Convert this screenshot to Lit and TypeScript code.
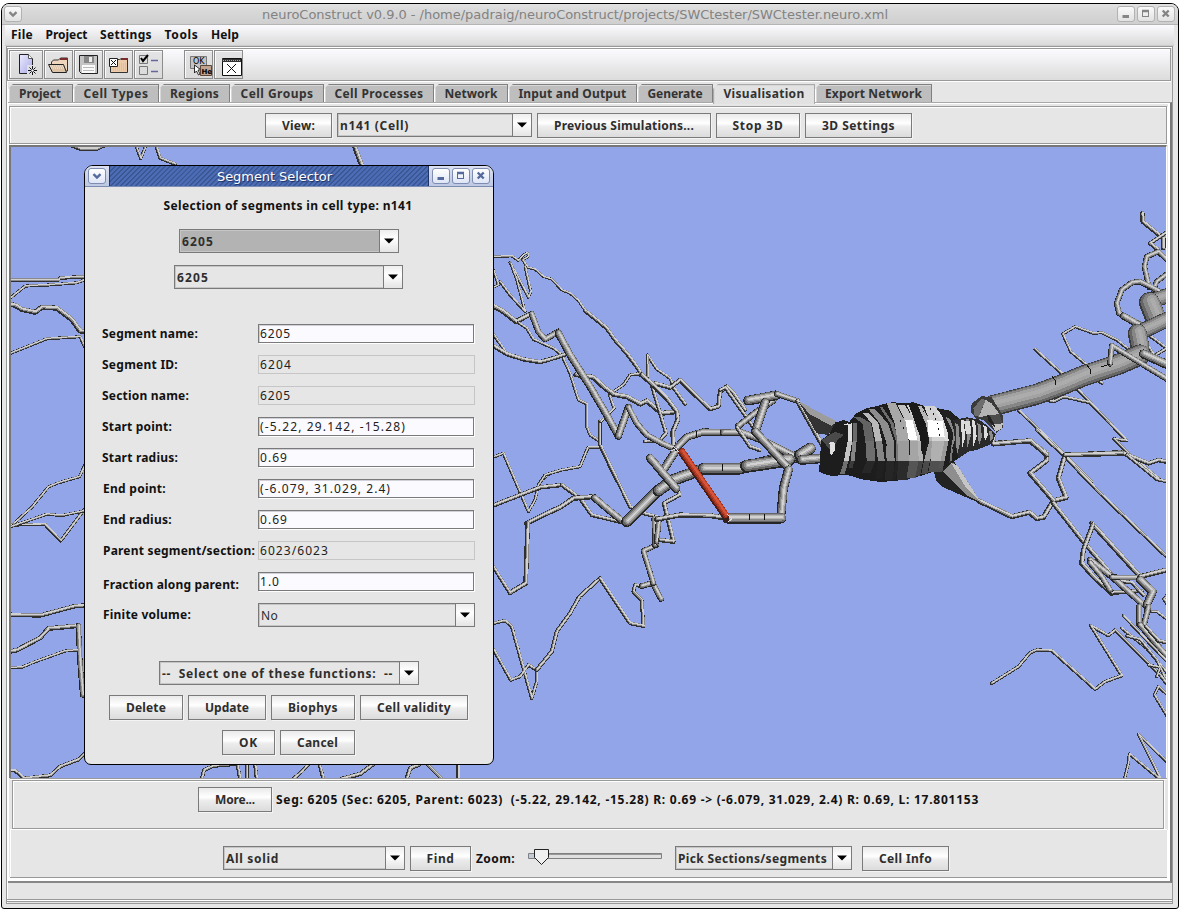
import { LitElement, html, svg, css } from "lit";
import { customElement, property } from "lit/decorators.js";

/** A run of text whose letter spacing is adjusted to fill a given width. */
@customElement("fit-text")
class FitText extends LitElement {
  @property({ type: Number }) w = 0;
  static styles = css`
    :host { display: inline-block; white-space: pre; }
    span { display: inline-block; white-space: pre; }
  `;
  render() {
    return html`<span><slot></slot></span>`;
  }
  firstUpdated() {
    const span = this.renderRoot.querySelector("span") as HTMLElement;
    const n = (this.textContent || "").length;
    const natural = span.getBoundingClientRect().width;
    if (this.w && n) {
      this.style.letterSpacing = (this.w - natural) / n + "px";
      this.style.width = this.w + "px";
    }
  }
}

const t = (w: number, s: string) => html`<fit-text w=${w}>${s}</fit-text>`;

type Tube = [number, string, string?];
interface Patch { x: number; y: number; sy?: number; tubes: Tube[]; }

// Dendrite segments, in thirds of a pixel from each patch origin (sy: vertical units per pixel).
const back: Patch[] = [
  { x: 0, y: 0, tubes: [
    [10, "215,436 240,446 290,446 312,436"], [6, "407,436 422,476 438,436"],
    [7, "468,436 480,475 525,492"], [12, "1063,436 1075,470 1087,500"],
  ]},
  { x: 0, y: 140, sy: 2.45, tubes: [
    [8, "30,343 175,343 180,338 260,335"], [6, "30,388 75,358 150,355 230,350 260,341"],
    [12, "30,403 45,405 65,415 105,422 125,410 170,412 215,440 240,468 260,470"],
    [6, "30,523 140,487 240,482 258,515"],
    [6, "30,948 95,900 145,850 175,840 238,825 258,790"],
    [7, "30,943 135,942 182,982 258,900"], [6, "30,948 140,917 185,920 258,908"],
    [10, "30,1163 120,1165 225,1142 260,1140"],
    [11, "30,1253 50,1250 120,1220 145,1197 235,1190"], [13, "235,1190 240,1280 248,1360"],
    [6, "30,1293 65,1292 100,1280 195,1252 232,1250"],
    [8, "30,1545 45,1545 72,1564 150,1557 180,1535 235,1518 258,1500"],
  ]},
  { x: 80, y: 460, tubes: [
    [8, "365,957 372,930 400,918 472,912 480,957"], [8, "500,912 500,957"], [8, "525,912 530,957"],
    [8, "640,957 665,935 685,912"], [8, "718,912 730,957"], [10, "785,957 840,942 880,912"],
    [10, "980,957 990,925 1015,915"], [7, "1040,912 1085,957"], [9, "1135,912 1135,957"],
  ]},
  { x: 490, y: 240, tubes: [
    [5, "0,50 20,50 65,48 85,62 100,45 112,38 115,50 98,60 112,82 135,88 160,110 185,118 215,150 240,160 265,182 285,212"],
    [9, "285,212 320,240 350,265 375,300 410,340 440,380 455,405"],
    [6, "60,68 85,115 115,172 122,155 105,80"], [5, "62,70 80,120 105,215"], [6, "30,125 60,165 105,215"],
    [5, "8,85 25,135 10,142"], [6, "5,275 48,338"],
    [12, "5,195 40,215 78,245 125,220"],
    [6, "85,248 110,265 130,298 190,325 215,345 240,400 265,480 290,492 290,560 300,585 330,605"],
    [10, "5,315 50,342 100,358 150,366 180,358 235,340"],
    [6, "330,540 330,620 380,722"], [6, "330,622 295,622 270,680 215,690 180,700 155,720"],
    [6, "370,455 400,435 420,405 440,402 456,408"], [6, "358,465 372,505 332,545"],
    [12, "258,404 310,412 340,440 370,463 410,470 450,492 470,483 515,520 560,515"],
    [8, "485,435 510,520 528,580 510,600 465,605"],
    [6, "473,410 472,345 500,388 540,415 550,440"], [8, "548,440 585,492"],
    [10, "495,430 540,443 570,420 615,465 660,507 685,500 690,455 710,440 730,460 765,510"],
    [11, "455,405 500,445 530,475 560,515 563,540 548,575 550,620"],
    [15, "125,222 145,275 165,298 205,275"], [21, "205,280 240,345 300,440 350,525 383,585"],
    [21, "385,588 415,502"], [15, "415,502 440,550 470,585 515,610 550,625"],
  ]},
  { x: 490, y: 450, tubes: [
    [6, "0,25 40,10 115,185 135,150 145,105 165,75 215,60 270,50 292,-5"],
    [10, "0,170 90,135 150,112 215,105"], [9, "215,105 270,145 305,195 400,218"],
    [12, "110,220 160,195 210,172 250,145 310,140"], [20, "314,144 350,175 395,212"],
    [11, "113,220 107,400 60,428"], [8, "0,335 60,430"],
    [8, "333,-10 420,170 460,190 500,200"],
    [7, "0,522 45,512 65,530 125,745 140,695 140,660 115,645 90,680 62,690 0,580"],
    [9, "140,660 185,605 200,545 240,490 268,440 330,385"],
    [8, "330,385 420,520 460,528 455,450 430,425 435,405 460,410"],
    [16, "455,408 485,400"], [16, "488,400 513,447"], [13, "490,400 460,303 500,285"],
    [14, "493,205 495,285"], [14, "500,275 507,205"], [10, "510,270 550,275 522,160 568,135 562,115"],
    [12, "500,208 570,195 660,197 710,205"],
    [32, "410,215 505,120"], [34, "505,122 550,90 640,57"], [34, "640,57 745,57 850,30 930,20"],
    [24, "520,60 565,-10"], [24, "480,24 558,116"],
  ]},
  { x: 950, y: 200, tubes: [
    [10, "577,40 578,65 640,115 640,145"], [9, "660,90 600,130 625,150"],
    [13, "597,262 583,200 590,170 625,155 660,188"], [13, "610,270 620,245 660,215"],
    [16, "575,375 507,340 500,310 515,270 545,248 570,245 605,262 660,292"],
    [20, "520,348 572,378"],
    [7, "600,408 650,445 612,468 590,430"],
    [6, "545,455 500,420 455,398 430,400 375,380 338,402 362,455 410,495 430,535 457,550"],
    [7, "255,448 335,520"], [7, "375,560 425,612"],
    [7, "280,598 310,605 340,590 420,608 530,722 492,717 540,765 630,840"],
    [7, "205,630 345,765 425,845"],
  ]},
  { x: 940, y: 430, tubes: [
    [8, "290,0 375,80 475,185 690,390"],
    [12, "115,212 215,260 268,247 290,266 310,262 340,212 378,203 355,145 375,75 545,68"],
    [12, "160,25 162,40 268,33 320,70 320,92 270,130 340,212"],
    [11, "340,220 430,335 515,435"],
    [10, "545,68 625,100 655,90 690,98"], [7, "560,75 650,148 680,155"],
    [12, "455,280 600,440"], [12, "458,285 430,360 425,400 460,440 515,490"],
    [10, "515,488 605,483"], [8, "520,450 575,458 610,495"],
    [18, "450,390 515,440 605,520"], [16, "450,398 485,440 510,480"],
    [14, "515,442 600,443"], [12, "600,440 690,417"], [24, "600,450 638,485 620,525"],
    [15, "597,530 597,583"], [15, "625,530 612,583"],
    [17, "600,585 640,632 690,690"], [9, "618,590 655,632 690,640"],
    [6, "550,557 600,610 690,705"], [6, "545,595 620,655 690,740"], [6, "560,618 600,628 650,690 675,745"],
    [6, "635,545 650,545 690,575"], [7, "685,490 672,508 685,528"],
    [7, "155,760 235,710 270,668 290,660 335,662 465,778 495,755 545,737 452,587 505,617 525,600 660,735 690,775"],
    [6, "625,705 660,712 650,740"],
    [6, "690,802 655,770 643,795 687,868"],
    [6, "690,1005 595,913 662,1048"], [6, "660,1048 568,972 565,1000 553,1048"],
  ]},
];

const front: Patch[] = [
  { x: 720, y: 340, tubes: [
    [8, "0,150 15,142 100,262"], [18, "55,258 110,215 160,182"],
    [21, "-129,322 -99,291 -51,276 10,278"], [20, "10,278 60,276 130,302 235,355"],
    [9, "50,262 90,320 118,330"],
    [38, "80,379 140,370 205,360"], [34, "240,345 270,326"],
    [28, "84,182 168,166"], [16, "170,162 232,183"], [11, "232,183 325,348"],
    [26, "135,188 106,275"], [24, "106,275 205,385"], [26, "205,390 190,445 183,520"],
    [28, "245,360 318,354"], [30, "22,535 183,535"],
  ]},
];

const trunk: Patch[] = [
  { x: 950, y: 200, tubes: [
    [44, "615,300 680,278"], [62, "598,308 615,350"], [46, "580,392 670,350"], [56, "562,400 570,440"],
    [62, "125,618 260,583 330,557 400,528 500,495 570,465"],
    [26, "580,462 665,500"],
    [16, "660,543 485,437 480,492"],
    [12, "118,705 130,732 240,722 290,765"],
    [12, "345,765 515,760"],
  ]},
];

const shift = (pts: string, p: Patch, dx: number, dy: number) =>
  pts.split(" ").map((q) => {
    const [a, b] = q.split(",").map(Number);
    return `${(p.x + a / 3 + dx).toFixed(2)},${(p.y + b / (p.sy ?? 3) + dy).toFixed(2)}`;
  }).join(" ");

type Layer = [string, number, number];
const THICK: Layer[] = [
  ["#262626", 1, 0], ["#646464", 0.84, 0.06], ["#8c8c8c", 0.62, 0.1], ["#b4b4b4", 0.4, 0.12], ["#d2d2d2", 0.16, 0.12],
];
const MASSIVE: Layer[] = [
  ["#3a3a3a", 1, 0], ["#666", 0.9, 0.03], ["#868686", 0.74, 0.08], ["#a2a2a2", 0.48, 0.13], ["#acacac", 0.2, 0.14],
];
const THIN: Layer[] = [["#303030", 1, 0], ["#8a8a8a", 0.66, 0.13], ["#d0d0d0", 0.32, 0.17]];
const RED: Layer[] = [["#4c1c14", 1, 0], ["#8e2e1c", 0.8, 0.08], ["#b83e26", 0.6, 0.13], ["#d6553a", 0.3, 0.16]];

const tube = (p: Patch, [w3, pts]: Tube, layers?: Layer[]) => {
  const w = w3 / 3 + (w3 < 16 ? 1.1 : 0.4);
  const set = layers ?? (w3 > 40 ? MASSIVE : w3 > 12 ? THICK : THIN);
  return set.map(([c, k, o]) => svg`<polyline points=${shift(pts, p, w * o, -w * o)} fill="none"
    stroke=${c} stroke-width=${Math.max(w * k, 1)} stroke-linejoin="round" stroke-linecap="round" />`);
};
const patches = (ps: Patch[]) => ps.map((p) => p.tubes.map((q) => tube(p, q)));

// Soma slices: top x/y, x at the two shading breaks, bottom x/y, width, upper/middle/lower tone.
const slices: [number, number, number, number, number, number, number, string, string, string][] = [
  [366, 255, 383, 372, 360, 402, 14, "#dedede", "#c4c4c4", "#707070"],
  [384, 248, 398, 392, 385, 385, 12, "#6a6a6a", "#858585", "#3a3a3a"],
  [402, 232, 436, 440, 425, 400, 26, "#636363", "#6e6e6e", "#272727"],
  [428, 218, 466, 474, 466, 418, 20, "#b9b9b9", "#868686", "#202020"],
  [446, 208, 497, 500, 494, 420, 24, "#8d8d8d", "#8a8a8a", "#262626"],
  [478, 200, 527, 528, 516, 420, 10, "#6d6d6d", "#777", "#222"],
  [500, 190, 532, 535, 530, 420, 34, "#a8a8a8", "#9c9c9c", "#2b2b2b"],
  [532, 194, 570, 568, 560, 414, 28, "#c2c2c2", "#a5a5a5", "#555"],
  [560, 196, 594, 596, 586, 408, 14, "#d0d0d0", "#b4b4b4", "#444"],
  [590, 198, 628, 612, 604, 402, 18, "#b8b8b8", "#9c9c9c", "#4a4a4a"],
  [612, 198, 636, 632, 625, 396, 42, "#d2d2d2", "#b0b0b0", "#505050"],
  [646, 212, 674, 662, 655, 384, 12, "#dcdcdc", "#999", "#555"],
  [676, 222, 694, 690, 684, 370, 6, "#8a8a8a", "#777", "#333"],
];

const P = (pts: number[][]) => pts.map(([a, b]) => `${720 + a / 3},${340 + b / 3}`).join(" ");
const poly = (fill: string, ...pts: number[][]) => svg`<polygon points=${P(pts)} fill=${fill} />`;

const soma = () => svg`
  ${poly("#333", [235, 183], [350, 245], [325, 285], [290, 280])}
  ${poly("#9c9c9c", [235, 183], [350, 245], [335, 258], [268, 222])}
  ${poly("#232323", [640, 390], [650, 425], [670, 442], [780, 490], [740, 430], [700, 360])}
  ${poly("#8e8e8e", [668, 395], [697, 368], [714, 378], [782, 487], [740, 466])}
  ${poly("#c6c6c6", [694, 370], [712, 376], [780, 484], [736, 440])}
  ${poly("#1d1d1d", [297, 395], [304, 300], [330, 280], [345, 248], [370, 240], [388, 246], [408, 220], [440, 205], [470, 198],
    [500, 190], [520, 186], [545, 190], [580, 187], [612, 198], [660, 206], [690, 212], [716, 235], [725, 260], [735, 330],
    [712, 358], [690, 372], [650, 392], [600, 408], [550, 420], [510, 424], [480, 426], [425, 418], [380, 404], [338, 408], [315, 403])}
  ${poly("#4a4a4a", [305, 300], [345, 275], [372, 285], [352, 300], [335, 335])}
  ${poly("#e0e0e0", [328, 308], [343, 305], [346, 330], [332, 348])}
  ${slices.map(([xt, yt, x1, x2, xb, yb, w, a, b, c]) => svg`
    ${poly(a, [xt, yt], [xt + w * 0.8, yt], [(xt + x1) / 2 + w + 8, 250], [x1 + w, 302], [x1, 302], [(xt + x1) / 2 + 8, 250])}
    ${poly(b, [x1, 302], [x1 + w, 302], [x2 + w, 362], [x2, 362])}
    ${poly(c, [x2, 362], [x2 + w, 362], [xb + w, yb], [xb, yb])}`)}
  ${poly("#fff", [556, 240], [578, 240], [592, 300], [566, 300])}
  ${poly("#fff", [622, 240], [668, 244], [674, 292], [626, 292])}
  ${poly("#1a1a1a", [565, 190], [592, 192], [612, 240], [622, 300], [606, 345], [600, 290])}
  ${poly("#202020", [660, 208], [690, 214], [712, 235], [728, 262], [720, 290], [700, 335], [690, 300]) }
  ${poly("#888", [676, 228], [692, 240], [708, 290], [694, 330], [700, 280])}
  ${poly("#2a2a2a", [700, 240], [740, 232], [775, 238], [800, 255], [828, 282], [815, 312], [770, 330], [745, 335], [715, 355], [706, 320])}
  ${[[706, 250, 98], [722, 238, 88], [738, 236, 88], [756, 240, 80], [772, 250, 68], [790, 256, 50], [806, 272, 34]].map(([x, y, h], i) =>
    poly(i % 2 ? "#dcdcdc" : "#8c8c8c", [x, y], [x + 9, y + 2], [x + 14, y + h * 0.6], [x + 4, y + h], [x + 3, y + h * 0.5]))}
  ${poly("#d8d8d8", [732, 242], [750, 242], [754, 282], [738, 282])}
  ${[[640, 220], [646, 235], [652, 248], [654, 265], [656, 283], [540, 240], [550, 262], [610, 212], [630, 205], [495, 300], [497, 312]].map(
    ([x, y]) => poly("#111", [x, y], [x + 3, y], [x + 3, y + 5], [x, y + 5]))}
`;

const knob = () => svg`
  ${poly("#3a3a3a", [752, 215], [755, 190], [785, 168], [815, 172], [848, 225], [850, 262], [830, 278], [790, 240], [768, 236])}
  ${poly("#6e6e6e", [760, 205], [785, 175], [797, 180], [776, 230], [764, 228])}
  ${poly("#b4b4b4", [797, 180], [815, 190], [838, 222], [808, 226], [776, 232])}
  ${poly("#4b4b4b", [808, 226], [838, 222], [848, 250], [824, 252])}
  ${poly("#c2c2c2", [815, 254], [848, 250], [846, 266], [826, 276]) }
  ${poly("#222", [800, 222], [812, 230], [826, 262], [806, 245])}`;

const rings = () => svg`
  <path d="M1052 376l3 4 1 5M1087 365l3 4 1 5M1101 367l9-3" stroke="#111" fill="none" />
  <path d="M722 464v7M749 514v6M764 514v6" stroke="#111" fill="none" />
  <path d="M696 431l1 6" stroke="#111" fill="none" />
  <circle cx="726.500" cy="520" r="2.500" fill="#3a201c" /><path d="M727 514l5 5-4 3" fill="none" stroke="#ddd" />
  <path d="M671 451l8-4M673 446l6 6" stroke="#ddd" />`;

const vArrow = svg`<path d="M4.500 6.200L8 9.600l3.500-3.400" fill="none" stroke="currentColor" stroke-width="2.400"/>`;
const minI = svg`<path d="M4.500 10.500h6.500" stroke="currentColor" stroke-width="3"/>`;
const maxI = svg`<path d="M5 5.200h6M4.500 5v6M10.500 5v6M4 10.500h7" stroke="currentColor" fill="none"/><path d="M4 5h7" stroke="currentColor" stroke-width="2.400"/>`;
const closeI = svg`<path d="M4.700 4.500l6 6M10.700 4.500l-6 6" stroke="currentColor" stroke-width="2.400"/>`;
const wb = (i: unknown) => html`<span class="wb"><svg width="16" height="16">${i}</svg></span>`;

const toolIcons = [
  svg`<defs><linearGradient id="pg" x2="1" y2="1"><stop stop-color="#ececff"/><stop offset="1" stop-color="#a9a9e6"/></linearGradient></defs>
    <path d="M3.500 3.500h9l4 4v15h-13z" fill="url(#pg)" stroke="#222"/><path d="M12.500 3.500v4h4" fill="#fff" stroke="#555"/>
    <path d="M11 14h9v9h-9z" fill="#dedee6"/><path d="M16.500 15v9M12 19.500h9M13.500 16.500l6 6M19.500 16.500l-6 6" stroke="#111"/><circle cx="16.500" cy="19.500" r="1.200" fill="#fff"/>`,
  svg`<path d="M6.500 20v-9l2-2h5l2-2h7v13z" fill="#eed5bb" stroke="#333"/><path d="M15 7h8v2h-8z" fill="#7a2c2c"/>
    <path d="M3.500 13.500h15l3 8H7.500z" fill="#dcc3a8" stroke="#222"/><path d="M5 15h13M6 17h13" stroke="#f8ece0" stroke-dasharray="1 1"/>`,
  svg`<path d="M4.500 4.500h18v18h-16l-2-2z" fill="#c4c4c4" stroke="#222"/><path d="M9 5h10v7H9z" fill="#888"/><path d="M14 6h3v5h-3z" fill="#eee"/>
    <path d="M7 14h13v8H7z" fill="#fafafa"/><path d="M8 16.500h11M8 19.500h11" stroke="#bbb"/>`,
  svg`<path d="M5.500 21.500v-12l2-1h7l2-1h6v14z" fill="#eccbaa" stroke="#333"/><path d="M16 7h7v2h-7z" fill="#7a2c2c"/><path d="M8 13h14M8 15h14M8 17h14M8 19h14" stroke="#d8b08c" stroke-dasharray="1 1"/>
    <path d="M4.500 7.500h8v8h-8z" fill="#fff" stroke="#222"/><path d="M6 9l5 5M11 9l-5 5" stroke="#111"/>`,
  svg`<path d="M4.500 4.500h8v8h-8zM4.500 15.500h8v8h-8z" fill="#dcdcdc" stroke="#777"/><path d="M6 7l2 3 5-6" fill="none" stroke="#000" stroke-width="2"/>
    <path d="M16 9.500h7M16 20.500h7" stroke="#66669c" stroke-width="1.500"/>`,
];

@customElement("app-root")
class AppRoot extends LitElement {
  static styles = css`
    :host { display: block; width: 1180px; height: 915px; background: #fff; overflow: hidden; position: relative;
      font: bold 12px/16px "Noto Sans", "Open Sans", sans-serif; color: #111; }
    * { box-sizing: border-box; }
    svg { display: block; }
    .window { margin: 3px 1px 0 1px; height: 906px; border: 1px solid #000; border-radius: 8px 8px 3px 3px; background: #e6e6e6; overflow: hidden; display: flex; flex-direction: column; }
    .host { display: flow-root; }
    .titlebar { height: 21px; flex: none; display: flex; align-items: center; padding: 0 3px 0 2px; color: #828282;
      background: linear-gradient(#e2e2e2, #d9d9d9 30%, #cfcfcf); border-bottom: 1px solid #b4b4b4; font: 13px/16px "DejaVu Sans", sans-serif; }
    .cap { flex: 1; display: flex; justify-content: center; padding-top: 1px; }
    .titlebar .cap { padding-left: 11px; }
    .winbtns { display: flex; gap: 2px; }
    .wb { width: 18px; height: 16px; border: 1px solid #b2b2b2; border-radius: 3px; background: linear-gradient(#fafafa, #e2e2e2); color: #858585; display: flex; align-items: center; justify-content: center; }
    .menubar { height: 21px; flex: none; margin: 0 4px 0 3px; padding: 2px 0 0 6px; display: flex; background: linear-gradient(#fbfbff, #dadada); border-bottom: 1px solid #ccc; }
    .menubar fit-text { margin-right: 12.500px; }
    .frame { margin: 0 5px 0 4px; height: 858px; flex: none; border: 1px solid #999; box-shadow: inset 1px 1px #fff; padding: 1px 0 0 0; display: flex; flex-direction: column; }
    .toolbar { height: 33px; flex: none; border: 1px solid #999; box-shadow: 0 1px #fff, inset 1px 1px #fff; background: linear-gradient(#fbfbff, #dcdcdc); display: flex; padding: 1px 0 0 1px; margin-right: 1px; gap: 1px; }
    .tool { width: 29px; height: 29px; border: 1px solid #8c8c8c; box-shadow: inset 1px 1px #fafafa; background: linear-gradient(#e4e4e6, #dadada); }
    .tool.wide { width: 34px; padding-left: 6px; }
    .tool.gap { margin-left: 20px; }
    .tabs { height: 18px; flex: none; margin: 3px 0 0 1px; display: flex; }
    .tab { height: 18px; border: 1px solid #808080; border-bottom: 0; border-left-color: #fff; background: #bebebe; display: flex; justify-content: center; align-items: center; color: #333;
      clip-path: polygon(0 5px, 5px 0, 100% 0, 100% 100%, 0 100%); box-shadow: inset 1px 1px #d8d8d8; }
    .tab.on { background: #e2e2e2; border-color: #aaa; height: 20px; padding-bottom: 2px; z-index: 1; }
    .pane { flex: none; height: 781px; margin-left: 1px; border-top: 1px solid #a8a8a8; border-right: 2px solid #777; border-bottom: 2px solid #888; box-shadow: inset 1px 1px #fff, inset -2px -4px #fff; padding: 3px 3px 0 1px; display: flex; flex-direction: column; }
    .bar { display: flex; border: 1px solid #999; box-shadow: inset 1px 1px #fff, 1px 1px #fff; }
    .bar.view { height: 38px; flex: none; padding: 6px 0 0 255px; gap: 5px; }
    .btn { height: 25px; border: 1px solid #7a7a7a; background: linear-gradient(#eaeaea, #fff 40%, #ececec 55%, #dcdcdc); display: flex; align-items: center; justify-content: center; color: #2e2e2e; box-shadow: 1px 1px #f4f4f4; }
    .combo { height: 24px; border: 1px solid #7a7a7a; box-shadow: inset 0 0 0 1px #c6c6c6; background: #e6e6e6; display: flex; align-items: center; padding-left: 2px; color: #2e2e2e; }
    .combo fit-text { padding-top: 1px; }
    .combo.sel { background: #b3b3b3; }
    .combo.plain { font-weight: normal; }
    .combo .arr { margin-left: auto; width: 19px; height: 22px; border-left: 1px solid #7a7a7a; background: linear-gradient(#eee, #fff 40%, #e4e4e4); display: flex; align-items: center; justify-content: center; }
    .scene { margin-top: 1px; width: 1158px; height: 633px; flex: none; border-top: 2px solid #777; border-left: 2px solid #777; border-right: 1px solid #fff; background: #91a5e8; overflow: hidden; }
    .bottom { width: 1152px; margin-left: 3px; flex: none; border: 1px solid #999; box-shadow: 1px 1px #fff, inset 1px 1px #fff; }
    .edge { height: 2px; flex: none; border-top: 1px solid #999; background: #fff; margin-left: 1px; width: 1157px; }
    .info { height: 49px; display: flex; padding: 6px 0 0 185px; gap: 4px; }
    .info .msg { padding-top: 5px; }
    .ctl { height: 49px; border-top: 0; border-left: 0; border-right: 0; display: flex; padding: 17px 0 0 213px; width: 1157px; margin-left: 1px; }
    .ctl .z { margin: 5px 13px 0 5px; }
    .f1 { width: 182px; margin-right: 5px; }
    .slider { margin-top: 2px; margin-right: 12px; }
    .statusline { border-top: 1px solid #999; border-bottom: 1px solid #999; background: #fff; height: 3px; margin-top: 16px; flex: none; }

    .dialog { position: absolute; left: 84px; top: 165px; width: 410px; height: 600px; border: 1px solid #000; border-radius: 9px 9px 7px 7px; background: #e6e6e6; overflow: hidden; display: flex; flex-direction: column; }
    .dtitle { height: 21px; flex: none; border-bottom: 1px solid #7d8cb4; background: linear-gradient(#dbe1f2, #bdc8e2); display: flex; align-items: center; padding: 0 3px 0 3px; font: 13px/16px "DejaVu Sans", sans-serif; color: #fff; }
    .dtitle .wb { border-color: #7d8cb0; background: linear-gradient(#fff, #dde5f6); color: #556a9c; }
    .dtitle .cap { height: 20px; margin: 0 3px; align-items: center; border-left: 1px solid #1f3468; border-right: 1px solid #1f3468; padding: 2px 0 0 11px; text-shadow: 1px 1px 1px #1a2c60;
      background: repeating-linear-gradient(135deg, #3a5794 0 1px, #4c6db6 1.500px 3px, #4666ae 3.500px); }
    .head { margin-top: 11px; display: flex; justify-content: center; padding-right: 2px; }
    .c1 { width: 220px; margin: 15px 0 0 94px; flex: none; }
    .c2 { width: 229px; margin: 12px 0 0 89px; flex: none; }
    .grid { display: grid; grid-template-columns: 156px 217px; grid-template-rows: repeat(10, 31px); margin: 35px 0 0 17px; }
    .grid .low { padding-left: 1px; }
    .lab { padding-top: 2px; }
    .lab.drop { padding-top: 5px; }
    .lab.drop1 { padding-top: 4px; }
    .fld { height: 19px; border: 1px solid #7a7a7a; box-shadow: inset 1px 1px #d0d0d8, 1px 1px #fff; background: #fbfbff; font-weight: normal; padding: 0 0 0 1px; color: #222; display: flex; align-items: center; width: 216px; }
    .fld.ro { background: #e6e6e6; border-color: #c6c6c6; box-shadow: none; width: 217px; }
    .fn { width: 260px; margin: 27px 0 0 74px; flex: none; }
    .btnrow { display: flex; gap: 5px; margin: 10px 0 0 24px; }
    .btnrow.two { margin-left: 137px; }
    .w67 { width: 67px; } .w195 { width: 195px; } .w174 { width: 174px; } .w84 { width: 84px; } .w107 { width: 107px; }
    .w74 { width: 74px; } .w78 { width: 78px; } .w108 { width: 108px; } .w53 { width: 53px; } .w75 { width: 75px; }
    .w61 { width: 61px; } .w177 { width: 177px; margin-right: 10px; } .w87 { width: 87px; }
    .t64 { width: 65px; padding-right: 1px; } .t86 { width: 86px; } .t71 { width: 71px; } .t94 { width: 94px; } .t110 { width: 110px; }
    .t74 { width: 74px; } .t129 { width: 129px; } .t76 { width: 76px; } .t102 { width: 102px; } .t117 { width: 117px; }
    .ok { font: 8px "DejaVu Sans", sans-serif; }
    .he { font: bold 7px "DejaVu Sans", sans-serif; }
  `;

  btn(cls: string, w: number, s: string) {
    return html`<div class="btn ${cls}">${t(w, s)}</div>`;
  }
  combo(cls: string, w: number, s: string) {
    return html`<div class="combo ${cls}">${t(w, s)}<span class="arr"><svg width="10" height="6"><path d="M0 .5h10L5 5.500z" fill="#000"/></svg></span></div>`;
  }
  row(lw: number, label: string, vw: number, v: string, ro = false, cls = "") {
    return html`<div class="lab ${cls}">${t(lw, label)}</div><div><div class="fld ${ro ? "ro" : ""}">${t(vw, v)}</div></div>`;
  }

  render() {
    const tabs: [string, number, string][] = [
      ["t64", 42, "Project"], ["t86", 65, "Cell Types"], ["t71", 49, "Regions"], ["t94", 73, "Cell Groups"],
      ["t110", 89, "Cell Processes"], ["t74", 53, "Network"], ["t129", 108, "Input and Output"],
      ["t76", 55, "Generate"], ["t102 on", 81, "Visualisation"], ["t117", 97, "Export Network"]];
    const org = { x: 0, y: 0, tubes: [] };
    return html`
      <div class="host"><div class="window">
        <div class="titlebar">${wb(vArrow)}<span class="cap">${t(626, "neuroConstruct v0.9.0 - /home/padraig/neuroConstruct/projects/SWCtester/SWCtester.neuro.xml")}</span>
          <span class="winbtns">${wb(minI)}${wb(maxI)}${wb(closeI)}</span></div>
        <div class="menubar">${t(22, "File")}${t(42, "Project")}${t(52, "Settings")}${t(34, "Tools")}${t(28, "Help")}</div>
        <div class="frame">
          <div class="toolbar">
            ${toolIcons.map((i, n) => html`<div class="tool ${n ? "" : "wide"}"><svg width="27" height="27">${i}</svg></div>`)}
            <div class="tool gap"><svg width="27" height="27">
              <path d="M5.500 5.500h16v12h-16z" fill="#c4c4c4" stroke="#777"/><text class="ok" x="8" y="12.500" fill="#000">OK</text>
              <path d="M9.500 14v8l2-2 2 4 1.500-1-2-4h3z" fill="#fff" stroke="#000" stroke-width=".8"/>
              <path d="M15.500 14.500h11v10h-11z" fill="#bfa38e" stroke="#5c4638"/><text class="he" x="16.500" y="22.500" fill="#000">He</text></svg></div>
            <div class="tool"><svg width="27" height="27"><path d="M7.500 7.500h19v17h-19z" fill="#fff" stroke="#111"/><path d="M7 9.500h19" stroke="#333" stroke-width="3"/><path d="M8 9.500h18" stroke="#aaa" stroke-dasharray="1 1"/><path d="M12 13l9 9M21 13l-9 9" stroke="#111"/></svg></div>
          </div>
          <div class="tabs">${tabs.map(([c, w, s]) => html`<div class="tab ${c}">${t(w, s)}</div>`)}</div>
          <div class="pane">
            <div class="bar view">
              ${this.btn("w67", 33, "View:")}${this.combo("w195", 69, "n141 (Cell)")}${this.btn("w174", 140, "Previous Simulations...")}${this.btn("w84", 51, "Stop 3D")}${this.btn("w107", 73, "3D Settings")}
            </div>
            <div class="scene">
              <svg width="1156" height="631" viewBox="11 147 1156 631" shape-rendering="crispEdges">
                ${patches(back)}
                ${patches(front)}
                ${tube(org, [22, "2045,1356 2176,1546"], RED)}
                ${patches(trunk)}
                ${soma()}
                ${knob()}
                ${rings()}
              </svg>
            </div>
            <div class="edge"></div>
            <div class="bottom info">${this.btn("w74", 40, "More...")}<span class="msg">${t(703, "Seg: 6205 (Sec: 6205, Parent: 6023)  (-5.22, 29.142, -15.28) R: 0.69 -> (-6.079, 31.029, 2.4) R: 0.69, L: 17.801153")}</span></div>
            <div class="bottom ctl">
              ${this.combo("f1", 53, "All solid")}${this.btn("w61", 28, "Find")}<span class="z">${t(39, "Zoom:")}</span>
              <svg class="slider" width="135" height="18"><path d="M.5 5.500h133v5H.5z" fill="#e0e0e0" stroke="#808080"/><path d="M1 6.500h132" stroke="#999"/><path d="M1 6h8v4H1z" fill="#c3cbda"/>
                <path d="M6.500 1.500h14v8L13.500 16.500 6.500 9.500z" fill="#f0f0f0" stroke="#222"/></svg>
              ${this.combo("w177", 149, "Pick Sections/segments")}${this.btn("w87", 53, "Cell Info")}
            </div>
          </div>
          <div class="statusline"></div>
        </div>
      </div></div>

      <div class="dialog">
        <div class="dtitle">${wb(vArrow)}<span class="cap">${t(115, "Segment Selector")}</span><span class="winbtns">${wb(minI)}${wb(maxI)}${wb(closeI)}</span></div>
        <div class="head">${t(249, "Selection of segments in cell type: n141")}</div>
        ${this.combo("c1 sel", 32, "6205")}
        ${this.combo("c2", 32, "6205")}
        <div class="grid">
          ${this.row(96, "Segment name:", 31, "6205")}
          ${this.row(76, "Segment ID:", 32, "6204", true)}
          ${this.row(87, "Section name:", 31, "6205", true)}
          ${this.row(70, "Start point:", 146, "(-5.22, 29.142, -15.28)")}
          ${this.row(76, "Start radius:", 28, "0.69")}
          ${this.row(63, "End point:", 131, "(-6.079, 31.029, 2.4)", false, "low")}
          ${this.row(69, "End radius:", 28, "0.69", false, "low")}
          ${this.row(152, "Parent segment/section:", 69, "6023/6023", true, "low")}
          ${this.row(136, "Fraction along parent:", 20, "1.0", false, "low drop")}
          <div class="lab low drop1">${t(88, "Finite volume:")}</div>${this.combo("plain", 17, "No")}
        </div>
        ${this.combo("fn", 231, "--  Select one of these functions:  --")}
        <div class="btnrow">${this.btn("w74", 40, "Delete")}${this.btn("w78", 44, "Update")}${this.btn("w84", 50, "Biophys")}${this.btn("w108", 74, "Cell validity")}</div>
        <div class="btnrow two">${this.btn("w53", 19, "OK")}${this.btn("w75", 41, "Cancel")}</div>
      </div>`;
  }
}
